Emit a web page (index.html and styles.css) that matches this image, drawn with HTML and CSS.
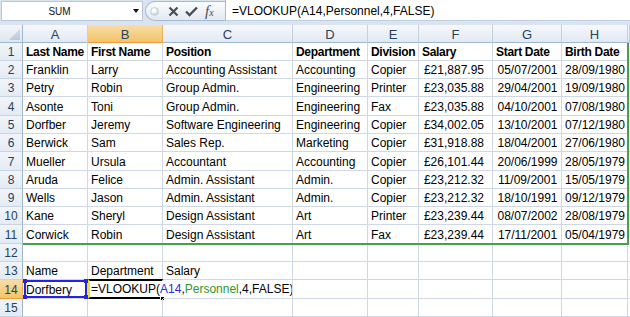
FILE: index.html
```html
<!DOCTYPE html>
<html lang="en">
<head>
    <meta charset="UTF-8">
    <title>Personnel - VLOOKUP</title>
    <link rel="stylesheet" href="styles.css">
</head>
<body>
    <!-- formula bar: name box, buttons, formula -->
    <div class="formula-bar">
        <div class="name-box">
            <span class="name">SUM</span>
            <span class="drop"></span>
        </div>
        <div class="func-buttons">
            <span class="grip"></span>
            <svg class="btn-icon" width="11" height="11" viewBox="0 0 11 11"><path d="M1.5 1.5 L9.5 9.5 M9.5 1.5 L1.5 9.5" stroke="#4d4d4d" stroke-width="2.2" fill="none"/></svg>
            <svg class="btn-icon" width="13" height="11" viewBox="0 0 13 11"><path d="M1 5.5 L4.5 9 L12 1.5" stroke="#4d4d4d" stroke-width="2.4" fill="none"/></svg>
            <span class="fx">f<span class="x">x</span></span>
        </div>
        <div class="formula-input">=VLOOKUP(A14,Personnel,4,FALSE)</div>
    </div>

    <div class="sheet">
        <div class="row head">
            <div class="corner"></div>
            <div class="col-head">A</div>
            <div class="col-head active">B</div>
            <div class="col-head">C</div>
            <div class="col-head">D</div>
            <div class="col-head">E</div>
            <div class="col-head">F</div>
            <div class="col-head">G</div>
            <div class="col-head">H</div>
            <div class="col-head"></div>
        </div>
        <div class="row bold">
            <div class="row-head">1</div>
            <div class="cell">Last Name</div><div class="cell">First Name</div><div class="cell">Position</div><div class="cell">Department</div>
            <div class="cell">Division</div><div class="cell">Salary</div><div class="cell">Start Date</div><div class="cell">Birth Date</div><div class="cell"></div>
        </div>
        <div class="row">
            <div class="row-head">2</div>
            <div class="cell">Franklin</div><div class="cell">Larry</div><div class="cell">Accounting Assistant</div><div class="cell">Accounting</div>
            <div class="cell">Copier</div><div class="cell num">£21,887.95</div><div class="cell date">05/07/2001</div><div class="cell date">28/09/1980</div><div class="cell"></div>
        </div>
        <div class="row">
            <div class="row-head">3</div>
            <div class="cell">Petry</div><div class="cell">Robin</div><div class="cell">Group Admin.</div><div class="cell">Engineering</div>
            <div class="cell">Printer</div><div class="cell num">£23,035.88</div><div class="cell date">29/04/2001</div><div class="cell date">19/09/1980</div><div class="cell"></div>
        </div>
        <div class="row tall">
            <div class="row-head">4</div>
            <div class="cell">Asonte</div><div class="cell">Toni</div><div class="cell">Group Admin.</div><div class="cell">Engineering</div>
            <div class="cell">Fax</div><div class="cell num">£23,035.88</div><div class="cell date">04/10/2001</div><div class="cell date">07/08/1980</div><div class="cell"></div>
        </div>
        <div class="row">
            <div class="row-head">5</div>
            <div class="cell">Dorfber</div><div class="cell">Jeremy</div><div class="cell">Software Engineering</div><div class="cell">Engineering</div>
            <div class="cell">Copier</div><div class="cell num">£34,002.05</div><div class="cell date">13/10/2001</div><div class="cell date">07/12/1980</div><div class="cell"></div>
        </div>
        <div class="row">
            <div class="row-head">6</div>
            <div class="cell">Berwick</div><div class="cell">Sam</div><div class="cell">Sales Rep.</div><div class="cell">Marketing</div>
            <div class="cell">Copier</div><div class="cell num">£31,918.88</div><div class="cell date">18/04/2001</div><div class="cell date">27/06/1980</div><div class="cell"></div>
        </div>
        <div class="row tall">
            <div class="row-head">7</div>
            <div class="cell">Mueller</div><div class="cell">Ursula</div><div class="cell">Accountant</div><div class="cell">Accounting</div>
            <div class="cell">Copier</div><div class="cell num">£26,101.44</div><div class="cell date">20/06/1999</div><div class="cell date">28/05/1979</div><div class="cell"></div>
        </div>
        <div class="row">
            <div class="row-head">8</div>
            <div class="cell">Aruda</div><div class="cell">Felice</div><div class="cell">Admin. Assistant</div><div class="cell">Admin.</div>
            <div class="cell">Copier</div><div class="cell num">£23,212.32</div><div class="cell date">11/09/2001</div><div class="cell date">15/05/1979</div><div class="cell"></div>
        </div>
        <div class="row">
            <div class="row-head">9</div>
            <div class="cell">Wells</div><div class="cell">Jason</div><div class="cell">Admin. Assistant</div><div class="cell">Admin.</div>
            <div class="cell">Copier</div><div class="cell num">£23,212.32</div><div class="cell date">18/10/1991</div><div class="cell date">09/12/1979</div><div class="cell"></div>
        </div>
        <div class="row">
            <div class="row-head">10</div>
            <div class="cell">Kane</div><div class="cell">Sheryl</div><div class="cell">Design Assistant</div><div class="cell">Art</div>
            <div class="cell">Printer</div><div class="cell num">£23,239.44</div><div class="cell date">08/07/2002</div><div class="cell date">28/08/1979</div><div class="cell"></div>
        </div>
        <div class="row tall">
            <div class="row-head">11</div>
            <div class="cell">Corwick</div><div class="cell">Robin</div><div class="cell">Design Assistant</div><div class="cell">Art</div>
            <div class="cell">Fax</div><div class="cell num">£23,239.44</div><div class="cell date">17/11/2001</div><div class="cell date">05/04/1979</div><div class="cell"></div>
        </div>
        <div class="row">
            <div class="row-head">12</div>
            <div class="cell"></div><div class="cell"></div><div class="cell"></div><div class="cell"></div>
            <div class="cell"></div><div class="cell"></div><div class="cell"></div><div class="cell"></div><div class="cell"></div>
        </div>
        <div class="row">
            <div class="row-head">13</div>
            <div class="cell">Name</div><div class="cell">Department</div><div class="cell">Salary</div><div class="cell"></div>
            <div class="cell"></div><div class="cell"></div><div class="cell"></div><div class="cell"></div><div class="cell"></div>
        </div>
        <div class="row tall">
            <div class="row-head active">14</div>
            <div class="cell ref">Dorfbery
                <span class="ref-box"><i class="handle tl"></i><i class="handle tr"></i><i class="handle bl"></i><i class="handle br"></i></span>
            </div>
            <div class="cell editing">=VLOOKUP(<span class="ref-a">A14</span>,<span class="ref-p">Personnel</span>,4,FALSE)<span class="caret"></span>
                <i class="fill-handle"></i>
            </div>
            <div class="cell"></div><div class="cell"></div>
            <div class="cell"></div><div class="cell"></div><div class="cell"></div><div class="cell"></div><div class="cell"></div>
        </div>
        <div class="row">
            <div class="row-head">15</div>
            <div class="cell"></div><div class="cell"></div><div class="cell"></div><div class="cell"></div>
            <div class="cell"></div><div class="cell"></div><div class="cell"></div><div class="cell"></div><div class="cell"></div>
        </div>

        <!-- outline of the Personnel range A1:H11 -->
        <div class="range-outline"></div>
    </div>
</body>
</html>
```

FILE: styles.css
```css
* { box-sizing: border-box; }

body {
    margin: 0;
    width: 630px;
    height: 317px;
    overflow: hidden;
    background: #fff;
    font-family: "Liberation Sans", Arial, sans-serif;
    font-size: 12px;
    color: #000;
}

/* formula bar */
.formula-bar {
    display: flex;
    align-items: flex-start;
    height: 25px;
    background: #dae4f0;
}
.name-box {
    display: flex;
    align-items: center;
    width: 142px;
    height: 20px;
    margin: 1px 0 0 1px;
    background: #fff;
    border: 1px solid #b9c7d9;
}
.name-box .name {
    flex: 1;
    text-align: center;
    font-size: 10px;
    padding-right: 16px;
    color: #111;
}
.name-box .drop {
    width: 0;
    height: 0;
    margin-right: 3px;
    border-left: 3.5px solid transparent;
    border-right: 3.5px solid transparent;
    border-top: 4px solid #111;
}
.func-buttons {
    display: flex;
    align-items: center;
    width: 80px;
    height: 20px;
    margin: 1px 0 0 2px;
    padding-left: 4px;
    background: linear-gradient(#fbfcfe, #e2e9f3);
    border: 1px solid #a9b9cf;
    border-right: none;
    border-radius: 10px 0 0 10px;
}
.grip {
    width: 9px;
    height: 9px;
    border-radius: 50%;
    background: radial-gradient(circle at 40% 35%, #fff 20%, #c4ccd6 75%);
    border: 1px solid #c8d0da;
}
.btn-icon { margin-left: 9px; }
.btn-icon + .btn-icon { margin-left: 6px; }
.fx {
    margin-left: 7px;
    font-family: "Liberation Serif", serif;
    font-style: italic;
    font-size: 15px;
    color: #4d4d4d;
}
.fx .x { font-size: 10px; }
.formula-input {
    flex: 1;
    height: 21px;
    padding-left: 6px;
    line-height: 22px;
    background: #fff;
    border-left: 1px solid #a9b9cf;
    border-bottom: 1px solid #c2cfe0;
}

/* grid */
.sheet { position: relative; }
.row {
    display: grid;
    grid-template-columns: 23px 65px 75px 130px 75px 51px 74px 69px 66px 1fr;
    height: 18px;
}
.row.tall { height: 19px; }
.row.bold .cell { font-weight: bold; letter-spacing: -0.3px; }

.corner {
    position: relative;
    background: linear-gradient(#f3f6fa, #dfe6f0);
    border-right: 1px solid #9eb6ce;
    border-bottom: 1px solid #9eb6ce;
}
.corner::after {
    content: "";
    position: absolute;
    right: 2px;
    bottom: 2px;
    width: 11px;
    height: 11px;
    background: linear-gradient(#d3deeb, #b9c9dd);
    clip-path: polygon(100% 0, 100% 100%, 0 100%);
}
.col-head {
    display: flex;
    align-items: center;
    justify-content: center;
    padding-top: 1px;
    font-size: 13px;
    background: linear-gradient(#f6f8fb, #e2e9f3);
    border-right: 1px solid #c3d0e0;
    border-bottom: 1px solid #9eb6ce;
    color: #27415f;
}
.col-head.active, .row-head.active {
    background: linear-gradient(#f9dca6, #f2c46b);
    border-right-color: #e9b35d;
    border-bottom-color: #f29b3a;
}
.row-head {
    display: flex;
    align-items: flex-end;
    justify-content: center;
    padding-bottom: 1px;
    line-height: 14px;
    background: linear-gradient(#f1f5fa, #e4ebf4);
    border-right: 1px solid #9eb6ce;
    border-bottom: 1px solid #c5d3e3;
    color: #27415f;
}
.cell {
    position: relative;
    display: flex;
    align-items: flex-end;
    padding: 0 2px 1px 3px;
    line-height: 14px;
    white-space: nowrap;
    border-right: 1px solid #d0d7e5;
    border-bottom: 1px solid #d0d7e5;
}
.cell.num { justify-content: flex-end; padding-right: 8px; }
.cell.date { justify-content: center; padding: 0 0 1px 1px; }

/* formula being edited in B14, with A14 referenced */
.ref-box {
    position: absolute;
    left: 1px;
    top: 0;
    right: 0;
    bottom: 0;
    border: 2px solid #2424e6;
}
.handle {
    position: absolute;
    width: 4px;
    height: 4px;
    background: #2424e6;
}
.handle.tl { left: -3px; top: -3px; }
.handle.tr { right: -3px; top: -3px; }
.handle.bl { left: -3px; bottom: -3px; }
.handle.br { right: -3px; bottom: -3px; }

.cell.editing {
    padding-left: 1px;
    border-top: 2px solid #000;
    border-bottom: 2px solid #000;
    border-left: 2px solid #f2e21a;
    border-right-color: transparent;
    margin-top: -1px;
}
.ref-a { color: #2a2ad6; }
.ref-p { color: #2e962e; }
.caret {
    display: inline-block;
    width: 1px;
    height: 14px;
    margin-left: 1px;
    background: #000;
}
.fill-handle {
    position: absolute;
    right: -3px;
    bottom: -4px;
    width: 5px;
    height: 5px;
    background: #000;
    border: 1px solid #fff;
}

.range-outline {
    position: absolute;
    left: 23px;
    top: 18px;
    width: 606px;
    height: 202px;
    border-right: 2px solid #45a04a;
    border-bottom: 2px solid #45a04a;
    pointer-events: none;
}
```
